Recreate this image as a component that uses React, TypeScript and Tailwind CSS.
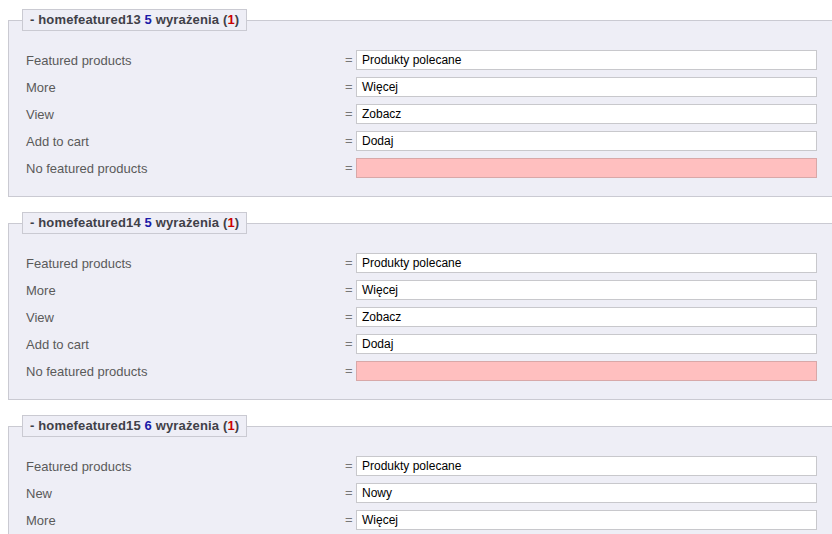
import React from "react";

type Row = { label: string; value: string };

const groups: { name: string; count: number; missing: number; rows: Row[] }[] = [
  {
    name: "homefeatured13",
    count: 5,
    missing: 1,
    rows: [
      { label: "Featured products", value: "Produkty polecane" },
      { label: "More", value: "Więcej" },
      { label: "View", value: "Zobacz" },
      { label: "Add to cart", value: "Dodaj" },
      { label: "No featured products", value: "" },
    ],
  },
  {
    name: "homefeatured14",
    count: 5,
    missing: 1,
    rows: [
      { label: "Featured products", value: "Produkty polecane" },
      { label: "More", value: "Więcej" },
      { label: "View", value: "Zobacz" },
      { label: "Add to cart", value: "Dodaj" },
      { label: "No featured products", value: "" },
    ],
  },
  {
    name: "homefeatured15",
    count: 6,
    missing: 1,
    rows: [
      { label: "Featured products", value: "Produkty polecane" },
      { label: "New", value: "Nowy" },
      { label: "More", value: "Więcej" },
      { label: "View", value: "Zobacz" },
      { label: "Add to cart", value: "Dodaj" },
      { label: "No featured products", value: "" },
    ],
  },
];

export default function App() {
  return (
    <div
      className="w-[832px] h-[534px] overflow-hidden bg-white text-[12px]"
      style={{ fontFamily: '"Liberation Sans", Arial, sans-serif' }}
    >
      <div className="flex flex-col gap-[15px] pt-[9px]">
        {groups.map((g) => (
          <fieldset
            key={g.name}
            className="ml-2 w-[840px] shrink-0 border border-[#cacad2] bg-[#eeeef6] pl-[17px] pb-[18px]"
          >
            <legend className="ml-[-4px] h-[22px] border border-[#cacad2] bg-[#eeeef6] px-[7px] font-bold text-[13px] leading-[20px] tracking-[0.15px] text-[#404048]">
              - {g.name} <span className="text-[#1a1aa8]">{g.count}</span> wyrażenia (
              <span className="text-[#cc0000]">{g.missing}</span>)
            </legend>
            <div className="mt-[19px] flex flex-col gap-[7px]">
              {g.rows.map((r, i) => (
                <div key={i} className="flex h-[20px] items-center">
                  <div className="w-[319px] text-[13px] text-[#5a5a5a] pt-[1px]">{r.label}</div>
                  <div className="w-[11px] text-[13px] text-[#777] leading-[20px]">=</div>
                  <div
                    className={
                      "h-[20px] w-[461px] border px-[5px] leading-[18px] text-black " +
                      (r.value
                        ? "border-[#c8c8cc] bg-white"
                        : "border-[#d8a8a8] bg-[#ffbfbf]")
                    }
                  >
                    {r.value}
                  </div>
                </div>
              ))}
            </div>
          </fieldset>
        ))}
      </div>
    </div>
  );
}
